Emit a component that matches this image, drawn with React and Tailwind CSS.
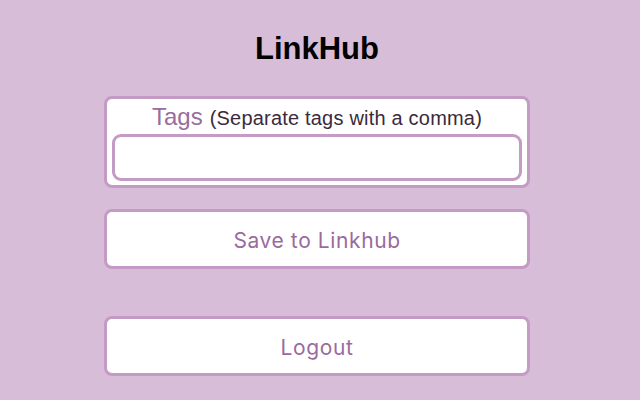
import React from "react";

const App = () => (
  <div className="min-h-screen w-full bg-[#d8bdd8] flex flex-col items-center pt-[31px] pr-[6px] font-['Liberation_Sans',Arial,sans-serif]">
    <h1 className="text-[31px] leading-[36px] font-bold text-black">LinkHub</h1>

    <div className="mt-[29px] w-[426px] h-[92px] bg-white border-[3px] border-[#c49bc4] rounded-[8px] px-[5px] pt-[5px] flex flex-col items-center">
      <label className="flex items-baseline gap-[7px] leading-[26px]">
        <span className="text-[24px] text-[#9a6c9c]">Tags</span>
        <span className="text-[20px] tracking-[0.2px] text-[#3b2a3c]">(Separate tags with a comma)</span>
      </label>
      <input
        type="text"
        className="mt-[3px] w-full h-[47px] bg-white border-[3px] border-[#c49bc4] rounded-[9px] outline-none"
      />
    </div>

    <button className="mt-[21px] w-[426px] h-[60px] pt-[3px] bg-white border-[3px] border-[#c49bc4] rounded-[8px] text-[21px] tracking-[0.6px] text-[#9a6a9e] font-['Inter',sans-serif]">
      Save to Linkhub
    </button>

    <button className="mt-[47px] w-[426px] h-[60px] pt-[3px] bg-white border-[3px] border-[#c49bc4] rounded-[8px] text-[21px] tracking-[0.6px] text-[#9a6a9e] font-['Inter',sans-serif]">
      Logout
    </button>
  </div>
);

export default App;
